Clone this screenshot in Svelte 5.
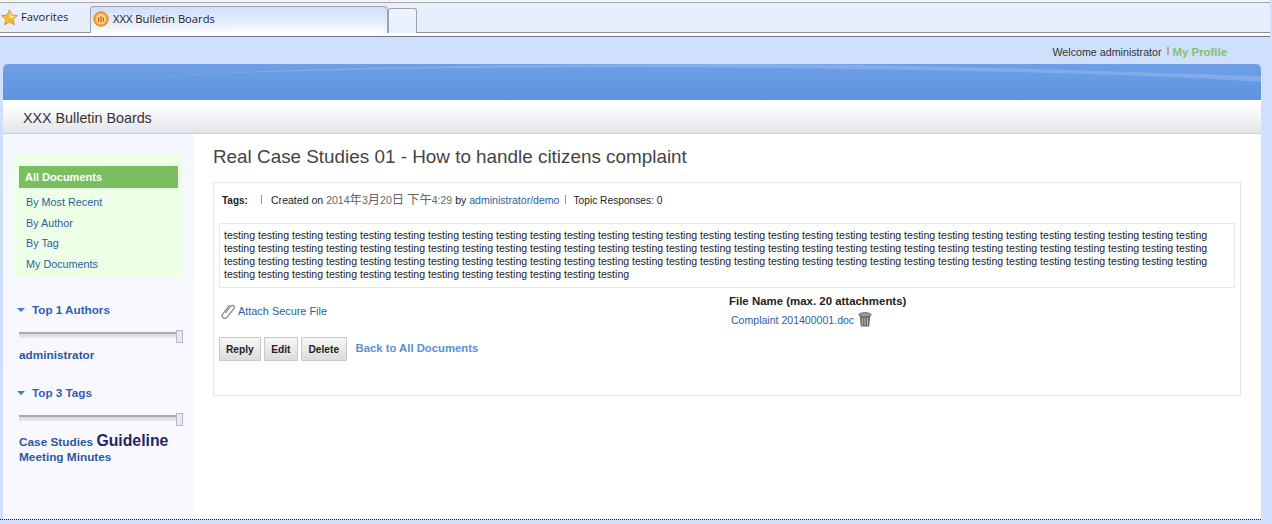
<script>
	const body = 'testing '.repeat(99).trim();
	const navItems = ['By Most Recent', 'By Author', 'By Tag', 'My Documents'];
</script>

<div class="page">
	<header class="browser">
		<div class="fav">
			<svg width="17" height="17" viewBox="0 0 16 16">
				<path d="M8 .8l2.200 4.800 5.200.6-3.900 3.500 1.100 5.200L8 12.300l-4.600 2.600 1.100-5.200L.6 6.200l5.200-.6z" fill="#f9bb35" stroke="#b98a35" stroke-width=".7" />
				<path d="M8 2.500l1.600 3.700 3.800.5-2.700 2.300L8 8z" fill="#fde08a" />
			</svg>
			<span>Favorites</span>
		</div>
		<div class="tab">
			<svg width="16" height="16" viewBox="0 0 18 18">
				<circle cx="9" cy="9" r="8.200" fill="#f3a02f" stroke="#d98a2b" />
				<circle cx="9" cy="9" r="5.800" fill="#fbd88b" />
				<path d="M6.300 7v5M9 6v7M11.700 7v5" stroke="#c46a12" stroke-width="1.500" />
			</svg>
			<span>XXX Bulletin Boards</span>
		</div>
		<div class="newtab"></div>
	</header>

	<div class="shell">
		<div class="welcome">
			<span>Welcome administrator</span>
			<i></i>
			<b>My Profile</b>
		</div>

		<div class="banner">
			<svg class="swoosh" width="1258" height="36" viewBox="0 0 1258 36">
				<path d="M40 20C220 4 520 2 760 4c200 2 380 6 498 14v-6C1120 8 920 0 720 0 500 0 220 4 40 20z" fill="#fff" opacity=".16" />
			</svg>
		</div>
		<div class="titlebar">XXX Bulletin Boards</div>

		<div class="columns">
			<aside>
				<nav>
					<div class="active">All Documents</div>
					{#each navItems as item}
						<a href="#top">{item}</a>
					{/each}
				</nav>

				<h3 class="first"><span class="arrow"></span>Top 1 Authors</h3>
				<div class="slider"><span></span></div>
				<div class="authors">administrator</div>

				<h3 class="second"><span class="arrow"></span>Top 3 Tags</h3>
				<div class="slider"><span></span></div>
				<div class="tags">
					Case Studies <strong>Guideline</strong><br />Meeting Minutes
				</div>
			</aside>

			<main>
				<h1>Real Case Studies 01 - How to handle citizens complaint</h1>
				<section class="topic">
					<div class="meta">
						<b>Tags:</b>
						<i class="sep first-sep"></i>
						<span>Created on <em>2014<u>年</u>3<u>月</u>20<u>日</u> <u>下午</u>4:29</em> by <a href="#top">administrator/demo</a></span>
						<i class="sep"></i>
						<span class="responses">Topic Responses: 0</span>
					</div>

					<div class="text">{body}</div>

					<div class="files">
						<div class="actions">
							<div class="attach">
								<svg width="16" height="16" viewBox="0 0 16 16" fill="none" stroke="#858585" stroke-width="1.200">
									<path d="M5.500 10l5.500-7a2 2 0 0 1 3.100 2.500L6.800 14.300a2.600 2.600 0 0 1-4.100-3.200L9.500 2.200" />
								</svg>
								<a href="#top">Attach Secure File</a>
							</div>
							<div class="buttons">
								<button>Reply</button>
								<button>Edit</button>
								<button>Delete</button>
								<a class="back" href="#top">Back to All Documents</a>
							</div>
						</div>
						<div class="list">
							<b>File Name (max. 20 attachments)</b>
							<div class="file">
								<a href="#top">Complaint 201400001.doc</a>
								<svg width="14" height="15" viewBox="0 0 14 15">
									<path d="M1.800 3.500h10.400l-1 11H2.800z" fill="#6a6a6a" />
									<path d="M4.500 5.500v8M7 5.500v8M9.500 5.500v8" stroke="#b8b8b8" />
									<ellipse cx="7" cy="2.800" rx="6.200" ry="2.200" fill="#9a9a9a" stroke="#4f4f4f" stroke-width=".7" />
								</svg>
							</div>
						</div>
					</div>
				</section>
			</main>
		</div>
		<div class="dots"></div>
	</div>
</div>

<style>
	:global(body) {
		margin: 0;
		background: #cfdffc;
	}

	.page {
		height: 524px;
		overflow: hidden;
		font-family: 'Liberation Sans', Arial, sans-serif;
		font-size: 10.55px;
		color: #222;
		background: #cfdffc;
	}

	a {
		color: #2a5f9e;
		text-decoration: none;
	}

	.browser {
		box-sizing: border-box;
		height: 37px;
		width: 1270px;
		display: flex;
		align-items: flex-end;
		padding: 0 0 4px;
		background: linear-gradient(#f4f4f6 0, #f4f4f6 2px, #a5a7ac 2px, #a5a7ac 3px, #e8f0fd 3px, #e6eefc 32px, #8c8f96 32px, #8c8f96 33px, #fafcff 33px, #fafcff 36px, #74767b 36px);
		font-family: 'Open Sans', 'Noto Sans', sans-serif;
		font-size: 11.2px;
	}

	.fav {
		width: 90px;
		height: 26px;
		display: flex;
		align-items: flex-start;
		gap: 3px;
		padding: 2px 0 0 1px;
		box-sizing: border-box;
		color: #1d1d1d;
	}

	.fav span {
		margin-top: -1px;
		line-height: 18px;
	}

	.tab {
		box-sizing: border-box;
		width: 298px;
		height: 27px;
		display: flex;
		align-items: center;
		gap: 4px;
		padding: 0 0 3px 2px;
		border: 1px solid #9da3ad;
		border-bottom: 0;
		border-radius: 4px 4px 0 0;
		background: linear-gradient(#cfe0fb, #e3ecfd 55%, #fbfcff);
		color: #1d1d1d;
	}

	.newtab {
		box-sizing: border-box;
		width: 29px;
		height: 25px;
		border: 1px solid #9da3ad;
		border-bottom: 0;
		border-radius: 3px 3px 0 0;
		background: linear-gradient(#edf3fe, #e7effd);
	}

	.shell {
		width: 1261px;
		padding-left: 3px;
		box-sizing: border-box;
	}

	.welcome {
		height: 27px;
		display: flex;
		justify-content: flex-end;
		align-items: center;
		padding: 3px 34px 0 0;
		box-sizing: border-box;
		color: #333;
		font-size: 10.700px;
	}

	.welcome i {
		width: 2px;
		height: 8px;
		background: #aaa;
		margin: -3px 4px 0 5px;
	}

	.welcome b {
		color: #86c070;
		font-size: 11.4px;
	}

	.banner {
		position: relative;
		height: 36px;
		border-radius: 5px 5px 0 0;
		overflow: hidden;
		background: linear-gradient(#6f9fe6, #6399e2 60%, #5f95de);
	}

	.swoosh {
		position: absolute;
		left: 0;
		top: 0;
	}

	.titlebar {
		box-sizing: border-box;
		height: 34px;
		padding: 10px 0 0 20px;
		font-size: 14.3px;
		color: #333;
		border-bottom: 1px solid #cfcfd4;
		background: linear-gradient(#fff 0, #fff 18%, #e3e4ea);
	}

	.columns {
		display: flex;
		height: 385px;
		background: #fff;
	}

	aside {
		box-sizing: border-box;
		width: 191px;
		padding: 19px 11px 0 11px;
		background: linear-gradient(#f5f7ff, #fbf8ff);
		font-weight: bold;
	}

	nav {
		box-sizing: border-box;
		height: 125px;
		padding: 13px 5px 0;
		background: #eeffe8;
		display: flex;
		flex-direction: column;
		font-weight: normal;
	}

	.active {
		height: 22px;
		line-height: 22px;
		padding-left: 6px;
		margin-bottom: 4px;
		background: #7abf5f;
		color: #fff;
		font-weight: bold;
		font-size: 11px;
	}

	nav a {
		height: 20.600px;
		line-height: 20.600px;
		padding-left: 7px;
		font-size: 10.8px;
	}

	h3 {
		display: flex;
		align-items: center;
		margin: 0;
		height: 14px;
		font-size: 11.7px;
		color: #2f5fae;
	}

	h3.first {
		margin-top: 24px;
	}

	h3.second {
		margin-top: 23px;
	}

	.arrow {
		width: 0;
		height: 0;
		border-left: 4px solid transparent;
		border-right: 4px solid transparent;
		border-top: 4px solid #3b78e0;
		margin: 2px 7px 0 3px;
	}

	.slider {
		position: relative;
		height: 6px;
		width: 159px;
		margin: 16px 0 0 5px;
		box-sizing: border-box;
		border-top: 2px solid #aaaab2;
		background: linear-gradient(#d9d9de, #e9e9ec);
	}

	.slider span {
		position: absolute;
		right: -5px;
		top: -4px;
		box-sizing: border-box;
		width: 7px;
		height: 13px;
		border: 1px solid #b4b8cc;
		background: #e6e8f4;
	}

	.authors {
		margin: 10px 0 0 5px;
		font-size: 11.8px;
		color: #2b5a9c;
	}

	.tags {
		margin: 12px 0 0 5px;
		font-size: 11.8px;
		line-height: 15px;
		color: #2b5a9c;
	}

	.tags strong {
		font-size: 15.8px;
		color: #1f2a5c;
	}

	main {
		flex: 1;
		padding: 12px 20px 0 19px;
	}

	h1 {
		margin: 0;
		font-size: 18.87px;
		line-height: 22px;
		font-weight: normal;
		color: #444;
	}

	.topic {
		box-sizing: border-box;
		height: 214px;
		margin-top: 14px;
		padding: 10px 5px 0;
		border: 1px solid #e6e6e6;
	}

	.meta {
		height: 15px;
		margin-bottom: 15px;
		display: flex;
		align-items: baseline;
		padding-left: 3px;
		color: #222;
	}

	.meta > b {
		width: 39px;
		font-size: 10px;
	}

	.meta em {
		font-style: normal;
		color: #666;
	}

	.meta u {
		text-decoration: none;
		font-size: 12.3px;
		font-family: 'Noto Sans CJK TC', sans-serif;
		line-height: 1;
	}

	.responses {
		font-size: 10.2px;
		margin-left: 1px;
	}

	.sep {
		align-self: center;
		width: 1px;
		height: 9px;
		background: #999;
		margin: -3px 7px 0 0;
	}

	.first-sep {
		margin-right: 9px;
	}

	.meta span + .sep {
		margin-left: 5px;
	}

	.text {
		box-sizing: border-box;
		height: 65px;
		padding: 5px 4px 0;
		line-height: 13px;
		border: 1px solid #e8e8e8;
		color: #222;
	}

	.files {
		display: flex;
		margin-top: 7px;
	}

	.actions {
		width: 510px;
	}

	.attach {
		display: flex;
		align-items: center;
		gap: 2px;
		margin-top: 8px;
		height: 16px;
		padding-left: 1px;
		font-size: 10.9px;
	}

	.buttons {
		display: flex;
		align-items: center;
		gap: 3px;
		margin-top: 18px;
	}

	button {
		height: 24px;
		padding: 0 6.500px;
		border: 1px solid #c9c9c9;
		background: linear-gradient(#f6f6f6, #dcdcdc);
		font: bold 10.2px 'Liberation Sans', Arial, sans-serif;
		color: #222;
	}

	button:first-child {
		padding: 0 6px;
	}

	.back {
		margin: -2px 0 0 6px;
		font-weight: bold;
		font-size: 11.3px;
		color: #5a8fd0;
	}

	.list b {
		display: block;
		font-size: 11.45px;
		line-height: 13px;
		margin-top: 0;
		color: #222;
	}

	.file {
		display: flex;
		align-items: center;
		gap: 4px;
		padding-left: 2px;
		margin-top: 4px;
	}

	.dots {
		height: 1px;
		margin-left: -3px;
		border-top: 1px dotted #222;
	}
</style>
